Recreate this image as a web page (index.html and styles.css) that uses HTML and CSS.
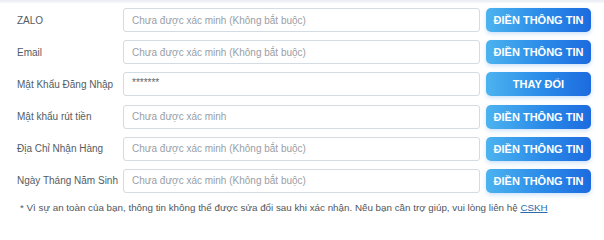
FILE: index.html
```html
<!DOCTYPE html>
<html lang="vi">
<head>
<meta charset="utf-8">
<link rel="stylesheet" href="styles.css">
</head>
<body>
<div class="topband"></div>
<div class="form">
  <div class="row">
    <div class="label">ZALO</div>
    <div class="field placeholder">Chưa được xác minh (Không bắt buộc)</div>
    <button class="btn">ĐIỀN THÔNG TIN</button>
  </div>
  <div class="row">
    <div class="label">Email</div>
    <div class="field placeholder">Chưa được xác minh (Không bắt buộc)</div>
    <button class="btn">ĐIỀN THÔNG TIN</button>
  </div>
  <div class="row">
    <div class="label">Mật Khẩu Đăng Nhập</div>
    <div class="field value">*******</div>
    <button class="btn">THAY ĐỔI</button>
  </div>
  <div class="row">
    <div class="label">Mật khẩu rút tiền</div>
    <div class="field placeholder">Chưa được xác minh</div>
    <button class="btn">ĐIỀN THÔNG TIN</button>
  </div>
  <div class="row">
    <div class="label">Địa Chỉ Nhận Hàng</div>
    <div class="field placeholder">Chưa được xác minh (Không bắt buộc)</div>
    <button class="btn">ĐIỀN THÔNG TIN</button>
  </div>
  <div class="row">
    <div class="label">Ngày Tháng Năm Sinh</div>
    <div class="field placeholder">Chưa được xác minh (Không bắt buộc)</div>
    <button class="btn">ĐIỀN THÔNG TIN</button>
  </div>
  <p class="note">* Vì sự an toàn của bạn, thông tin không thể được sửa đổi sau khi xác nhận. Nếu bạn cần trợ giúp, vui lòng liên hệ <a class="link" href="#">CSKH</a></p>
</div>
</body>
</html>
```

FILE: styles.css
```css
html, body {
  margin: 0;
  padding: 0;
  background: #ffffff;
  font-family: "Liberation Sans", Arial, sans-serif;
}
.topband {
  height: 3px;
  background: linear-gradient(180deg, #e9eef4, #f5f8fb);
}
.form {
  padding: 5px 0 0 17px;
  display: flex;
  flex-direction: column;
  gap: 8.2px;
}
.row {
  display: flex;
  align-items: center;
  height: 24px;
}
.label {
  width: 106px;
  flex: none;
  font-size: 10px;
  color: #555b63;
  white-space: nowrap;
}
.field {
  width: 357px;
  height: 24px;
  box-sizing: border-box;
  border: 1px solid #d3dbe3;
  border-radius: 3px;
  padding-left: 8px;
  display: flex;
  align-items: center;
  font-size: 10px;
}
.placeholder {
  color: #9a9ea4;
}
.value {
  color: #666;
  font-size: 10px;
  padding-bottom: 3px;
}
.btn {
  margin-left: 6px;
  width: 105px;
  height: 24px;
  border: none;
  border-radius: 5px;
  background: linear-gradient(90deg, #4cb3ef 0%, #2a8ae8 55%, #1d6bdf 100%);
  box-shadow: 0 2px 4px rgba(60, 140, 230, 0.25);
  color: #ffffff;
  font-family: "Liberation Sans", Arial, sans-serif;
  font-weight: bold;
  font-size: 11px;
  padding: 0;
}
.note {
  margin: 0;
  padding-left: 3px;
  font-size: 9.8px;
  color: #50555c;
  line-height: 14px;
}
.link {
  color: #2b6cb0;
  text-decoration: underline;
}
```
